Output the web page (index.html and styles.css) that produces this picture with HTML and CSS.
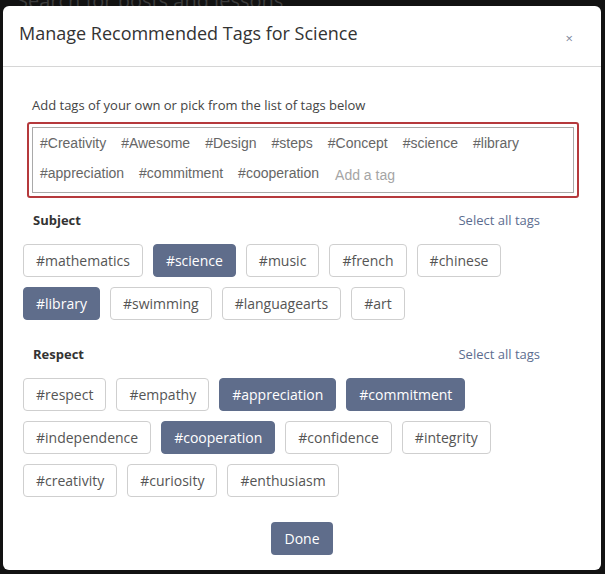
FILE: index.html
```html
<!DOCTYPE html>
<html>
<head>
<meta charset="utf-8">
<link rel="stylesheet" href="styles.css">
</head>
<body>
<div class="page">
  <div class="search">Search for posts and lessons</div>
</div>
<div class="modal">
  <div class="modal-header">
    <h1 class="title">Manage Recommended Tags for Science</h1>
    <span class="close">×</span>
  </div>
  <div class="modal-body">
    <p class="hint">Add tags of your own or pick from the list of tags below</p>
    <div class="input-wrap">
      <div class="input-box">
        <span class="itag">#Creativity</span>
        <span class="itag">#Awesome</span>
        <span class="itag">#Design</span>
        <span class="itag">#steps</span>
        <span class="itag">#Concept</span>
        <span class="itag">#science</span>
        <span class="itag">#library</span>
        <span class="itag">#appreciation</span>
        <span class="itag">#commitment</span>
        <span class="itag">#cooperation</span>
        <span class="placeholder">Add a tag</span>
      </div>
    </div>

    <div class="section-head">
      <span class="section-title">Subject</span>
      <span class="select-all">Select all tags</span>
    </div>
    <div class="tags">
      <span class="tag">#mathematics</span>
      <span class="tag on">#science</span>
      <span class="tag">#music</span>
      <span class="tag">#french</span>
      <span class="tag">#chinese</span>
      <span class="tag on">#library</span>
      <span class="tag">#swimming</span>
      <span class="tag">#languagearts</span>
      <span class="tag">#art</span>
    </div>

    <div class="section-head second">
      <span class="section-title">Respect</span>
      <span class="select-all">Select all tags</span>
    </div>
    <div class="tags">
      <span class="tag">#respect</span>
      <span class="tag">#empathy</span>
      <span class="tag on">#appreciation</span>
      <span class="tag on">#commitment</span>
      <span class="tag">#independence</span>
      <span class="tag on">#cooperation</span>
      <span class="tag">#confidence</span>
      <span class="tag">#integrity</span>
      <span class="tag">#creativity</span>
      <span class="tag">#curiosity</span>
      <span class="tag">#enthusiasm</span>
    </div>

    <div class="footer">
      <button class="done">Done</button>
    </div>
  </div>
</div>
</body>
</html>
```
FILE: styles.css
```css
html, body {
  margin: 0;
  padding: 0;
  height: 100%;
  background: #121212;
  overflow: hidden;
  font-family: "Open Sans", "Liberation Sans", sans-serif;
}
.page {
  padding: 0 17px;
}
.search {
  font-size: 20px;
  color: #3c3c3c;
  line-height: 20px;
  margin-top: -9px;
}
.modal {
  position: absolute;
  left: 3px;
  top: 6px;
  width: 598px;
  height: 564px;
  background: #fff;
  border-radius: 6px;
  box-sizing: border-box;
}
.modal-header {
  height: 61px;
  box-sizing: border-box;
  border-bottom: 1px solid #d6d6d6;
  display: flex;
  align-items: center;
  justify-content: space-between;
  padding: 0 28px 0 16px;
}
.title {
  margin: 0;
  font-size: 18px;
  font-weight: 400;
  color: #333;
  line-height: 24px;
  margin-top: -6px;
}
.close {
  font-size: 13px;
  color: #7d879c;
  margin-top: 3px;
}
.modal-body {
  padding: 30px 20px 0 20px;
}
.hint {
  margin: 0 0 9px 9px;
  font-size: 13px;
  color: #444;
  line-height: 16px;
}
.input-wrap {
  margin: 0 2px 0 4px;
  border: 2px solid #b5393c;
  border-radius: 3px;
  padding: 3px;
}
.input-box {
  border: 1px solid #a9a9a9;
  padding: 4px 0 6px 7px;
  display: flex;
  flex-wrap: wrap;
  column-gap: 15px;
  row-gap: 8px;
  font-family: "Liberation Sans", Arial, sans-serif;
  font-size: 14px;
  line-height: 22px;
}
.itag {
  color: #666;
}
.placeholder {
  color: #a5a5a5;
  margin-top: 2px;
  margin-left: 1px;
}
.section-head {
  display: flex;
  justify-content: space-between;
  align-items: center;
  margin: 13px 41px 15px 10px;
  font-size: 13px;
  line-height: 18px;
}
.section-head.second {
  margin-top: 25px;
}
.section-title {
  font-weight: 700;
  color: #333;
}
.select-all {
  color: #5c6d8f;
}
.tags {
  display: flex;
  flex-wrap: wrap;
  gap: 10px;
  padding-right: 40px;
}
.tag {
  display: inline-block;
  box-sizing: border-box;
  height: 33px;
  line-height: 31px;
  padding: 0 12px;
  border: 1px solid #cfcfcf;
  border-radius: 4px;
  font-size: 14px;
  color: #555;
  background: #fff;
}
.tag.on {
  background: #5f6d8b;
  border-color: #5f6d8b;
  color: #fff;
}
.footer {
  display: flex;
  justify-content: center;
  margin-top: 25px;
}
.done {
  font-family: "Open Sans", "Liberation Sans", sans-serif;
  font-size: 14px;
  height: 33px;
  padding: 0 13px;
  border: none;
  border-radius: 4px;
  background: #5f6d8b;
  color: #fff;
}
```
